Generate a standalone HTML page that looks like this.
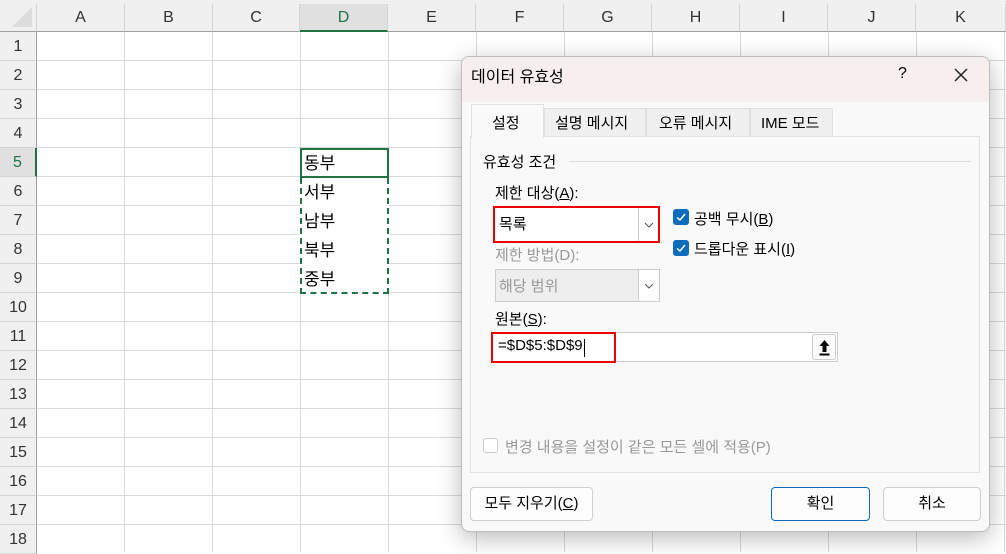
<!DOCTYPE html>
<html><head><meta charset="utf-8"><style>
*{box-sizing:border-box;margin:0;padding:0}
body{width:1006px;height:550px;overflow:hidden;background:#fff;font-family:"Liberation Sans","Noto Sans CJK KR",sans-serif;position:relative;font-size:15px;color:#000}
.abs{position:absolute}
.ch{position:absolute;top:4px;height:28px;background:#f0f0f0;border-right:1px solid #d4d4d4;border-bottom:1px solid #a0a0a0;text-align:center;line-height:28px;font-size:16px;color:#333}
.rh{position:absolute;left:0;width:37px;height:29px;background:#f0f0f0;border-bottom:1px solid #d4d4d4;border-right:1px solid #a0a0a0;text-align:center;line-height:29px;font-size:16px;color:#333}
.vl{position:absolute;top:32px;width:1px;height:520px;background:#dadada}
.hl{position:absolute;left:37px;width:970px;height:1px;background:#dadada}
.cell{position:absolute;left:304px;font-size:17px;line-height:29px;top:0}
.dlg{position:absolute;left:461px;top:56px;width:529px;height:476px;background:#f9f9f9;border:1px solid #bdbdbd;border-radius:8px;box-shadow:0 6px 24px rgba(0,0,0,.28);overflow:hidden}
.btn{position:absolute;height:34px;background:#fdfdfd;border:1px solid #d0d0d0;border-radius:4px;text-align:center;line-height:32px;font-size:15px}
.lbl{position:absolute;font-size:15px}
.chk{position:absolute;width:16px;height:16px;border-radius:3px;background:#0f6cbd}
.chk svg,.dd svg{position:absolute;left:0;top:0}
</style></head><body>
<div class="abs" style="left:0;top:0;width:1006px;height:32px;background:#f0f0f0"></div>
<div class="abs" style="left:0;top:4px;width:37px;height:28px;background:#f0f0f0;border-bottom:1px solid #a0a0a0;border-right:1px solid #d4d4d4"><div style="position:absolute;right:4px;bottom:4px;width:0;height:0;border-left:20px solid transparent;border-bottom:20px solid #dcdcdc"></div></div>
<div class="ch" style="left:37px;width:88px">A</div>
<div class="ch" style="left:125px;width:88px">B</div>
<div class="ch" style="left:213px;width:87px">C</div>
<div class="ch" style="left:300px;width:88px;background:#e0e0e0;border-bottom:2px solid #217346;color:#217346">D</div>
<div class="ch" style="left:388px;width:88px">E</div>
<div class="ch" style="left:476px;width:88px">F</div>
<div class="ch" style="left:564px;width:88px">G</div>
<div class="ch" style="left:652px;width:88px">H</div>
<div class="ch" style="left:740px;width:88px">I</div>
<div class="ch" style="left:828px;width:88px">J</div>
<div class="ch" style="left:916px;width:90px">K</div>
<div class="rh" style="top:32px">1</div><div class="rh" style="top:61px">2</div><div class="rh" style="top:90px">3</div><div class="rh" style="top:119px">4</div>
<div class="rh" style="top:148px;background:#e0e0e0;color:#217346;border-right:2px solid #217346">5</div>
<div class="rh" style="top:177px">6</div><div class="rh" style="top:206px">7</div><div class="rh" style="top:235px">8</div><div class="rh" style="top:264px">9</div><div class="rh" style="top:293px">10</div><div class="rh" style="top:322px">11</div><div class="rh" style="top:351px">12</div><div class="rh" style="top:380px">13</div><div class="rh" style="top:409px">14</div><div class="rh" style="top:438px">15</div><div class="rh" style="top:467px">16</div><div class="rh" style="top:496px">17</div><div class="rh" style="top:525px">18</div>
<div class="vl" style="left:124px"></div><div class="vl" style="left:212px"></div><div class="vl" style="left:300px"></div><div class="vl" style="left:388px"></div><div class="vl" style="left:476px"></div><div class="vl" style="left:564px"></div><div class="vl" style="left:652px"></div><div class="vl" style="left:740px"></div><div class="vl" style="left:828px"></div><div class="vl" style="left:916px"></div><div class="vl" style="left:1004px"></div>
<div class="hl" style="top:60px"></div><div class="hl" style="top:89px"></div><div class="hl" style="top:118px"></div><div class="hl" style="top:147px"></div><div class="hl" style="top:176px"></div><div class="hl" style="top:205px"></div><div class="hl" style="top:234px"></div><div class="hl" style="top:263px"></div><div class="hl" style="top:292px"></div><div class="hl" style="top:321px"></div><div class="hl" style="top:350px"></div><div class="hl" style="top:379px"></div><div class="hl" style="top:408px"></div><div class="hl" style="top:437px"></div><div class="hl" style="top:466px"></div><div class="hl" style="top:495px"></div><div class="hl" style="top:524px"></div>
<div class="abs" style="left:300px;top:148px;width:89px;height:146px;border:2px dashed #217346;background:#fff"></div>
<div class="abs" style="left:300px;top:148px;width:89px;height:30px;border:2px solid #217346"></div>
<div class="cell" style="top:149px">동부</div><div class="cell" style="top:178px">서부</div><div class="cell" style="top:207px">남부</div><div class="cell" style="top:236px">북부</div><div class="cell" style="top:265px">중부</div>

<div class="dlg">
<div class="abs" style="left:0;top:0;width:529px;height:45px;background:#f7eeee"></div>
<div class="lbl" style="left:9px;top:6px;font-size:16px">데이터 유효성</div>
<div class="lbl" style="left:436px;top:8px;font-size:16px">?</div>
<svg class="abs" style="left:492px;top:11px" width="14" height="14"><path d="M1 1L13 13M13 1L1 13" stroke="#222" stroke-width="1.5"/></svg>
<div class="abs" style="left:8px;top:79px;width:510px;height:337px;border:1px solid #e0e0e0;background:#f9f9f9"></div>
<div class="abs" style="left:9px;top:47px;width:73px;height:34px;background:#f9f9f9;border:1px solid #e0e0e0;border-bottom:none"></div>
<div class="abs" style="left:82px;top:51px;width:102px;height:29px;background:#f0f0f0;border:1px solid #e0e0e0"></div>
<div class="abs" style="left:184px;top:51px;width:104px;height:29px;background:#f0f0f0;border:1px solid #e0e0e0"></div>
<div class="abs" style="left:288px;top:51px;width:83px;height:29px;background:#f0f0f0;border:1px solid #e0e0e0"></div>
<div class="lbl" style="left:30px;top:55px">설정</div>
<div class="lbl" style="left:93px;top:55px">설명 메시지</div>
<div class="lbl" style="left:197px;top:55px">오류 메시지</div>
<div class="lbl" style="left:299px;top:55px">IME 모드</div>
<div class="lbl" style="left:21px;top:94px">유효성 조건</div>
<div class="abs" style="left:107px;top:104px;width:402px;height:1px;background:#ddd"></div>
<div class="lbl" style="left:33px;top:125px">제한 대상(<u>A</u>):</div>
<div class="abs" style="left:31px;top:149px;width:167px;height:37px;border:2px solid #e00;background:#fff"></div>
<div class="abs" style="left:176px;top:151px;width:1px;height:33px;background:#ccc"></div>
<div class="lbl" style="left:37px;top:156px">목록</div>
<svg class="abs" style="left:182px;top:165px" width="10" height="6"><path d="M1 1L5 5L9 1" fill="none" stroke="#555" stroke-width="1"/></svg>
<div class="chk" style="left:211px;top:152px"><svg width="16" height="16"><path d="M4 8.5L7 11L12 5" fill="none" stroke="#fff" stroke-width="1.4"/></svg></div>
<div class="lbl" style="left:232px;top:151px">공백 무시(<u>B</u>)</div>
<div class="chk" style="left:211px;top:183px"><svg width="16" height="16"><path d="M4 8.5L7 11L12 5" fill="none" stroke="#fff" stroke-width="1.4"/></svg></div>
<div class="lbl" style="left:232px;top:181px">드롭다운 표시(<u>I</u>)</div>
<div class="lbl" style="left:33px;top:187px;color:#999">제한 방법(D):</div>
<div class="abs" style="left:33px;top:212px;width:165px;height:33px;border:1px solid #ccc;background:#eee"></div>
<div class="abs" style="left:176px;top:213px;width:21px;height:31px;background:#fff;border-left:1px solid #ccc"></div>
<div class="lbl" style="left:37px;top:218px;color:#999">해당 범위</div>
<svg class="abs" style="left:182px;top:226px" width="10" height="6"><path d="M1 1L5 5L9 1" fill="none" stroke="#555" stroke-width="1"/></svg>
<div class="lbl" style="left:33px;top:251px">원본(<u>S</u>):</div>
<div class="abs" style="left:29px;top:275px;width:347px;height:30px;border:1px solid #ccc;background:#fff"></div>
<div class="abs" style="left:29px;top:275px;width:125px;height:31px;border:2px solid #e00"></div>
<div class="lbl" style="left:36px;top:280px">=$D$5:$D$9</div>
<div class="abs" style="left:122px;top:282px;width:1px;height:18px;background:#000"></div>
<div class="abs" style="left:350px;top:277px;width:24px;height:26px;border:1px solid #ccc;border-radius:3px;background:#fafafa"><svg width="24" height="26" style="position:absolute;left:0;top:0"><path d="M11.5 5L6.5 11H9.5V17H13.5V11H16.5Z" fill="#000"/><rect x="6.5" y="18.5" width="10" height="2" fill="#000"/></svg></div>
<div class="abs" style="left:21px;top:381px;width:15px;height:15px;border:1px solid #ccc;border-radius:3px;background:#fff"></div>
<div class="lbl" style="left:43px;top:379px;color:#999">변경 내용을 설정이 같은 모든 셀에 적용(P)</div>
<div class="btn" style="left:8px;top:430px;width:123px">모두 지우기(<u>C</u>)</div>
<div class="btn" style="left:309px;top:430px;width:99px;border:1px solid #0f6cbd">확인</div>
<div class="btn" style="left:421px;top:430px;width:98px">취소</div>
</div>
</body></html>
